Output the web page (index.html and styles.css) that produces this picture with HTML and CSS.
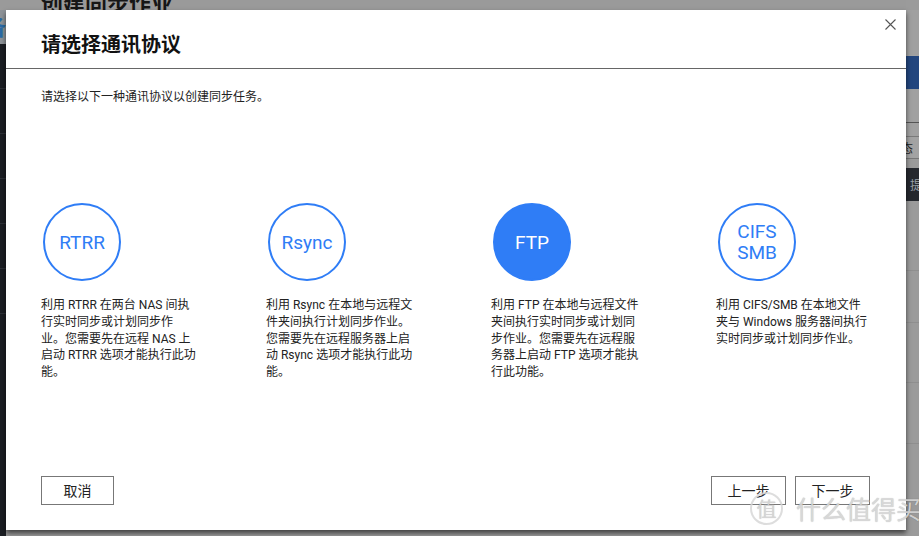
FILE: index.html
```html
<!DOCTYPE html>
<html lang="zh-CN">
<head>
<meta charset="utf-8">
<title>请选择通讯协议</title>
<link rel="stylesheet" href="styles.css">
</head>
<body>
<div class="screen">
  <div class="backdrop">
    <div class="bg-side">
      <div class="bg-side-top"></div>
      <div class="bg-side-logo"><span>备</span></div>
      <div class="bg-side-nav">
        <div class="nav-item"></div>
        <div class="nav-item"></div>
        <div class="nav-item"></div>
        <div class="nav-item"></div>
        <div class="nav-item"></div>
        <div class="nav-item"></div>
      </div>
    </div>
    <div class="bg-main">
      <div class="bg-title">创建同步作业</div>
    </div>
    <div class="bg-right">
      <div class="r-top"></div>
      <div class="r-row r-h1"></div>
      <div class="r-blue"></div>
      <div class="r-row r-h2"></div>
      <div class="r-row r-h3"></div>
      <div class="r-state">态</div>
      <div class="r-dark">提</div>
      <div class="r-row r-h4"></div>
      <div class="r-row r-h5"></div>
      <div class="r-row r-h6"></div>
      <div class="r-row r-h7"></div>
    </div>
  </div>

  <div class="dialog">
    <div class="dlg-head">
      <h1 class="dlg-title">请选择通讯协议</h1>
      <button class="dlg-close" aria-label="关闭">
        <svg width="11" height="11" viewBox="0 0 11 11"><path d="M0.5 0.5 L10.5 10.5 M10.5 0.5 L0.5 10.5" stroke="#555" stroke-width="1.1" fill="none"/></svg>
      </button>
    </div>
    <div class="dlg-body">
      <p class="intro">请选择以下一种通讯协议以创建同步任务。</p>
      <div class="options">
        <div class="option">
          <div class="circle">RTRR</div>
          <p class="desc">利用 RTRR 在两台 NAS 间执行实时同步或计划同步作业。您需要先在远程 NAS 上启动 RTRR 选项才能执行此功能。</p>
        </div>
        <div class="option">
          <div class="circle">Rsync</div>
          <p class="desc">利用 Rsync 在本地与远程文件夹间执行计划同步作业。您需要先在远程服务器上启动 Rsync 选项才能执行此功能。</p>
        </div>
        <div class="option">
          <div class="circle circle-active">FTP</div>
          <p class="desc">利用 FTP 在本地与远程文件夹间执行实时同步或计划同步作业。您需要先在远程服务器上启动 FTP 选项才能执行此功能。</p>
        </div>
        <div class="option">
          <div class="circle circle-two">CIFS<br>SMB</div>
          <p class="desc">利用 CIFS/SMB 在本地文件夹与 Windows 服务器间执行实时同步或计划同步作业。</p>
        </div>
      </div>
    </div>
    <div class="dlg-foot">
      <button class="btn btn-cancel">取消</button>
      <button class="btn">上一步</button>
      <button class="btn">下一步</button>
    </div>
  </div>

  <div class="watermark">
    <span class="wm-logo">值</span>
    <span class="wm-text">什么值得买</span>
  </div>
</div>
</body>
</html>
```

FILE: styles.css
```css
html, body {
  margin: 0;
  padding: 0;
}
body {
  width: 919px;
  height: 536px;
  overflow: hidden;
  font-family: Roboto, "Noto Sans CJK SC", sans-serif;
  color: #222;
}
.screen {
  position: relative;
  width: 919px;
  height: 536px;
  background: #9a9a9a;
  overflow: hidden;
}

/* ---------- dimmed background page ---------- */
.backdrop {
  display: grid;
  grid-template-columns: 6px 1fr 13px;
  height: 100%;
}
.bg-side {
  display: flex;
  flex-direction: column;
  background: #1b1e23;
  overflow: hidden;
}
.bg-side-top {
  height: 10px;
  background: #9a9a9a;
}
.bg-side-logo {
  height: 34px;
  background: #8e9398;
  overflow: hidden;
  position: relative;
}
.bg-side-logo span {
  display: block;
  margin-left: -16px;
  margin-top: 2px;
  font: bold 22px/26px "Noto Sans CJK SC", sans-serif;
  color: #2a6aa6;
}
.bg-side-nav {
  flex: 1;
  display: flex;
  flex-direction: column;
}
.nav-item {
  height: 44px;
  border-bottom: 1px solid #2e3238;
}
.bg-main {
  padding-left: 35px;
  overflow: hidden;
}
.bg-title {
  margin-top: -10px;
  font: bold 22px/22px "Noto Sans CJK SC", sans-serif;
  color: #161616;
}
.bg-right {
  display: flex;
  flex-direction: column;
  background: #9b9b9b;
  overflow: hidden;
}
.r-top { height: 10px; }
.r-row { border-bottom: 1px solid #8a8a8a; }
.r-h1 { height: 45px; border-bottom-color: #a3a3a3; background: #a0a0a0; }
.r-blue { height: 33px; background: #23467e; }
.r-h2 { height: 33px; border-bottom-color: #555; background: #a1a1a1; }
.r-h3 { height: 13px; border-bottom-color: #7a7a7a; background: #a1a1a1; }
.r-state {
  height: 21px;
  font: 12px/21px "Noto Sans CJK SC", sans-serif;
  color: #222;
  text-indent: -5px;
  border-bottom: 1px solid #777;
  background: #a3a3a3;
  white-space: nowrap;
}
.r-dark {
  margin-top: 9px;
  height: 33px;
  background: #25282e;
  font: 12px/33px "Noto Sans CJK SC", sans-serif;
  color: #9aa0a8;
  text-indent: 4px;
}
.r-h4 { height: 69px; border-bottom-color: #8f8f8f; }
.r-h5 { height: 51px; border-bottom-color: #8f8f8f; }
.r-h6 { height: 59px; border-bottom-color: #8f8f8f; }
.r-h7 { height: 60px; border-bottom-color: #8f8f8f; }

/* ---------- dialog ---------- */
.dialog {
  position: absolute;
  left: 6px;
  top: 10px;
  width: 900px;
  height: 520px;
  background: #fff;
  box-shadow: 0 3px 5px rgba(0, 0, 0, 0.6);
  display: flex;
  flex-direction: column;
}
.dlg-head {
  height: 58px;
  border-bottom: 1px solid #666;
  display: flex;
  align-items: flex-start;
  padding: 0 10px 0 35px;
}
.dlg-title {
  margin: 20px 0 0;
  font: bold 20px/28px "Noto Sans CJK SC", sans-serif;
  color: #111;
}
.dlg-close {
  margin-left: auto;
  margin-top: 9px;
  padding: 0;
  border: 0;
  background: none;
  width: 11px;
  height: 11px;
  display: flex;
}
.dlg-body {
  flex: 1;
  padding: 20px 35px 0;
}
.intro {
  margin: 0;
  font-size: 12px;
  line-height: 17px;
  color: #222;
}
.options {
  margin-top: 97px;
  display: grid;
  grid-template-columns: repeat(4, 225px);
}
.option {
  display: flex;
  flex-direction: column;
}
.circle {
  box-sizing: border-box;
  width: 78px;
  height: 78px;
  margin-left: 2px;
  border: 2px solid #2f7df6;
  border-radius: 50%;
  display: flex;
  align-items: center;
  justify-content: center;
  text-align: center;
  font-size: 19px;
  line-height: 21px;
  color: #2f7df6;
}
.circle-active {
  background: #2f7df6;
  color: #fff;
}
.desc {
  width: 155.5px;
  margin: 16px 0 0;
  font-size: 12px;
  line-height: 16.75px;
  color: #222;
}
.dlg-foot {
  display: flex;
  gap: 9px;
  padding: 0 36px 25px 35px;
}
.btn {
  box-sizing: border-box;
  width: 75px;
  height: 29px;
  border: 1px solid #777;
  background: #fff;
  padding: 0;
  font: 14px/27px "Noto Sans CJK SC", sans-serif;
  color: #222;
}
.btn-cancel {
  width: 73px;
  margin-right: auto;
}

/* ---------- watermark overlay ---------- */
.watermark {
  position: absolute;
  left: 750px;
  top: 492px;
  display: flex;
  align-items: center;
  gap: 13px;
  pointer-events: none;
}
.wm-logo {
  box-sizing: border-box;
  width: 33px;
  height: 33px;
  border: 2px solid rgba(215, 215, 215, 0.85);
  border-radius: 50%;
  display: flex;
  align-items: center;
  justify-content: center;
  font: 20px/1 "Noto Sans CJK SC", sans-serif;
  color: rgba(215, 215, 215, 0.9);
  text-shadow: 0 0 1px rgba(0, 0, 0, 0.25);
}
.wm-text {
  font: 25px/1 "Noto Sans CJK SC", sans-serif;
  letter-spacing: 0px;
  color: rgba(220, 220, 220, 0.9);
  text-shadow: 0 0 1px rgba(0, 0, 0, 0.3);
  white-space: nowrap;
}
```
